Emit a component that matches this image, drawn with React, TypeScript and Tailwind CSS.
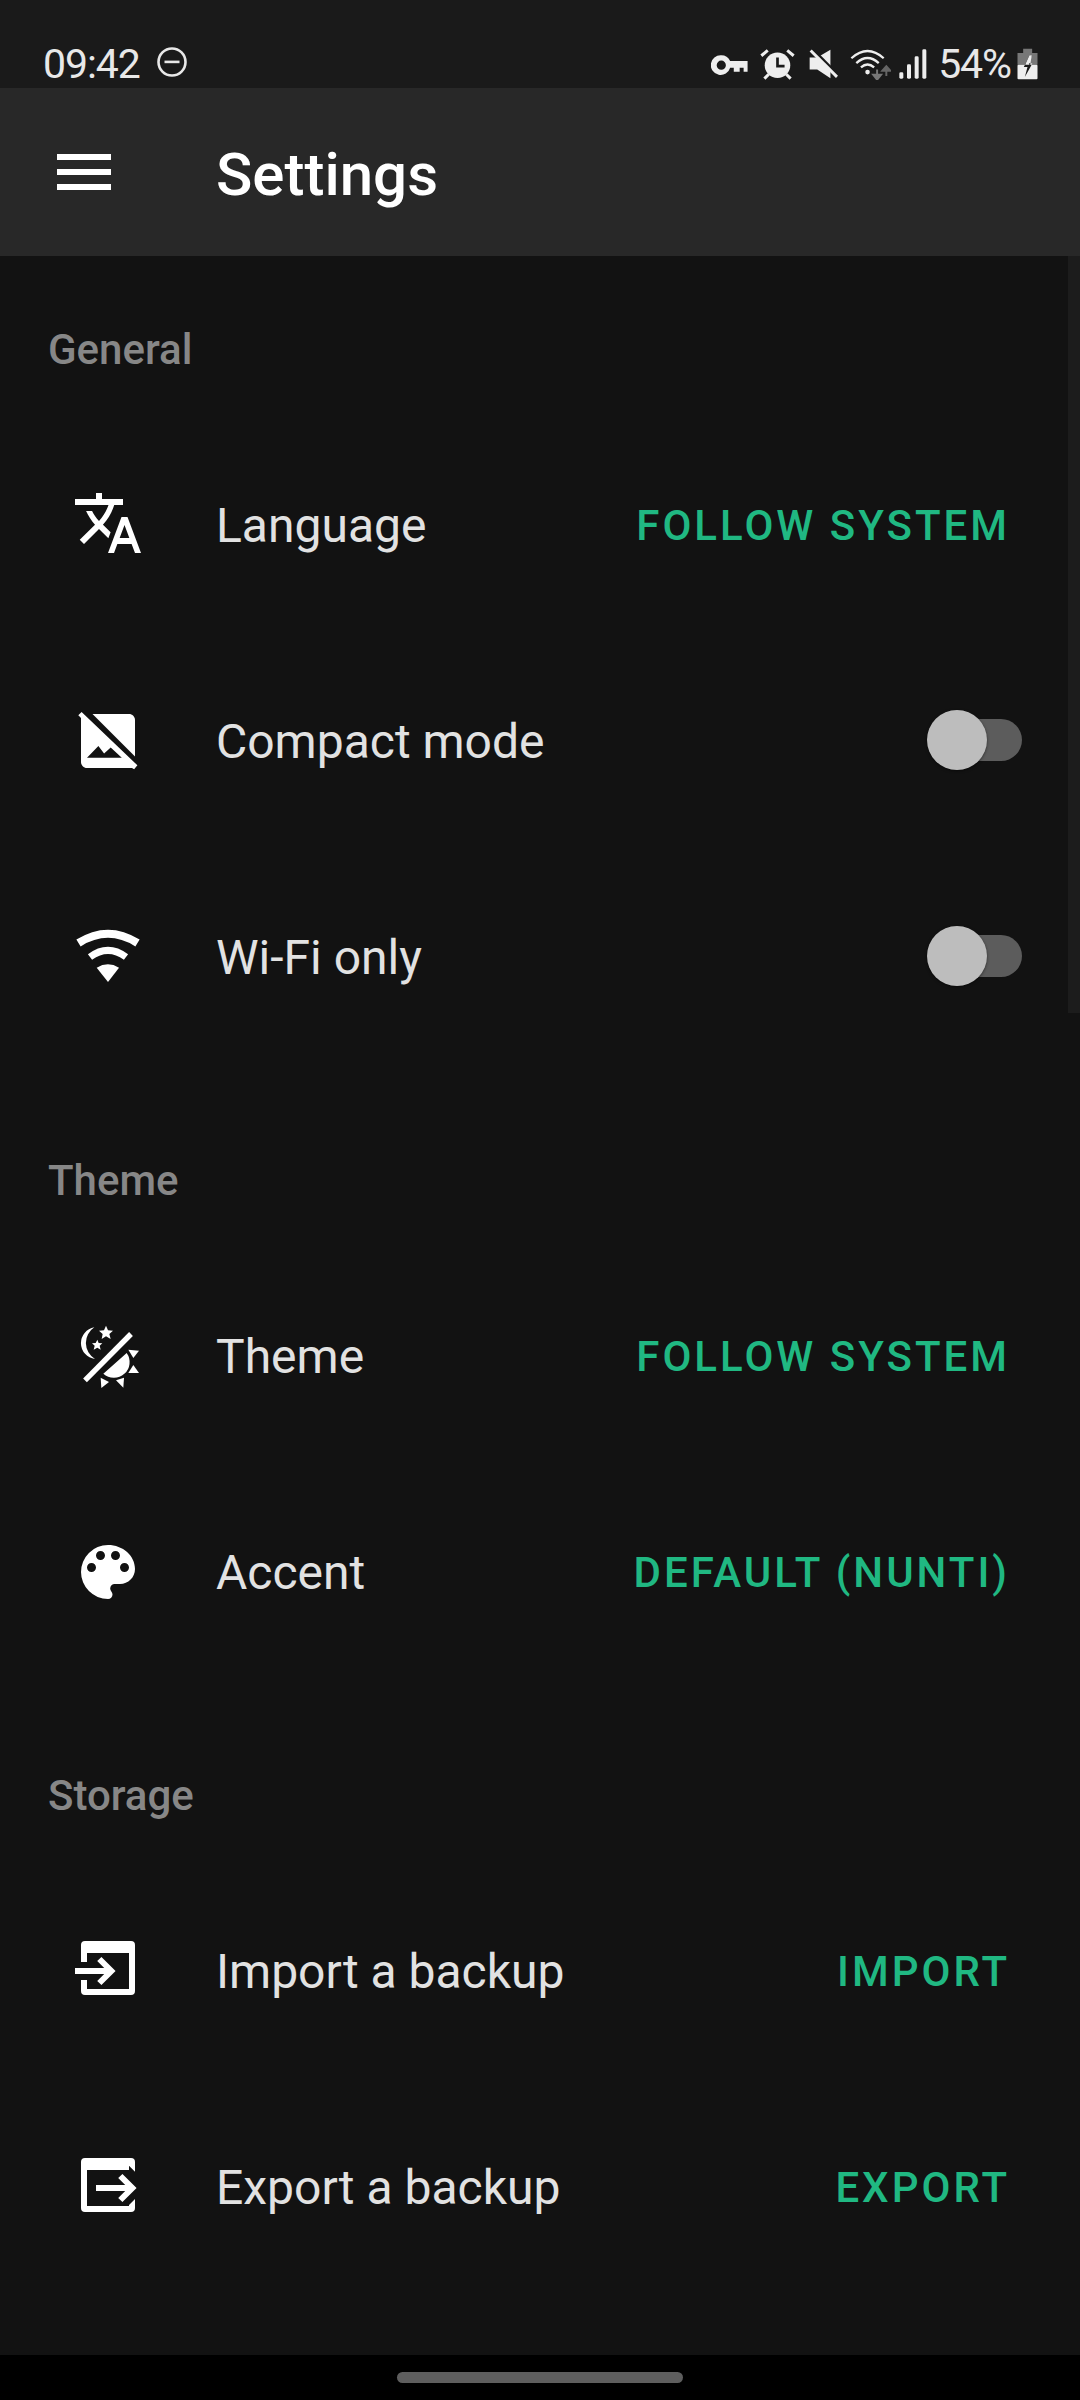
import React from 'react';

const ROBOTO = "font-['Roboto',sans-serif]";

function KeyIcon() {
  return (
    <svg viewBox="92 90 110 70" className="w-[37px] h-[23px]">
      <path
        fillRule="evenodd"
        fill="#eeeeee"
        d="M122 97a30 30 0 0 1 27 17H202V147H190V135H178V147H160V135H149A30 30 0 1 1 122 97zM122 113a14 14 0 1 0 0 28 14 14 0 0 0 0-28z"
      />
    </svg>
  );
}

function AlarmIcon() {
  return (
    <svg viewBox="240 80 104 92" className="w-[35px] h-[31px]">
      <circle cx="292" cy="128" r="38" fill="#eeeeee" />
      <path d="M292 105V131H313" fill="none" stroke="#1a1a1a" strokeWidth="8" />
      <path
        d="M244 100 263 84M340 100 321 84M253 168 266 155M331 168 318 155"
        fill="none"
        stroke="#eeeeee"
        strokeWidth="9"
      />
    </svg>
  );
}

function MuteIcon() {
  return (
    <svg viewBox="385 80 88 90" className="w-[29px] h-[30px]">
      <path d="M387 105H410L450 82V168L410 142H387Z" fill="#eeeeee" />
      <path d="M398 82 480 164" stroke="#1a1a1a" strokeWidth="8" fill="none" />
      <path d="M390 84 470 164" stroke="#eeeeee" strokeWidth="9" fill="none" />
    </svg>
  );
}

function WifiStatusIcon() {
  return (
    <svg viewBox="508 78 124 94" className="w-[41px] h-[31px]">
      <g fill="none" stroke="#eeeeee" strokeWidth="7">
        <path d="M512 106Q561 62 610 106" />
        <path d="M527 121Q561 90 595 121" />
        <path d="M541 134Q561 116 581 134" />
      </g>
      <circle cx="561" cy="148" r="7" fill="#eeeeee" />
      <path d="M590 140V160M578 156 590 171 602 156Z" stroke="#777777" strokeWidth="6" fill="#777777" />
      <path d="M618 160V140M606 144 618 130 630 144Z" stroke="#666666" strokeWidth="6" fill="#666666" />
    </svg>
  );
}

function SignalIcon() {
  return (
    <svg viewBox="654 84 84 90" className="w-[28px] h-[30px]" fill="#eeeeee">
      <rect x="655" y="154" width="12" height="19" rx="4" />
      <rect x="678" y="130" width="12" height="43" rx="4" />
      <rect x="701" y="106" width="12" height="67" rx="4" />
      <rect x="724" y="85" width="12" height="88" rx="4" />
    </svg>
  );
}

function BatteryIcon() {
  return (
    <svg viewBox="1010 78 62 96" className="w-[21px] h-[32px]">
      <path d="M1028 80H1055V93H1071V128H1011V93H1028Z" fill="#777777" />
      <rect x="1011" y="128" width="60" height="44" rx="3" fill="#eeeeee" />
      <path d="M1047 100 1030 135H1041L1033 165 1056 124H1045L1054 100Z" fill="#1a1a1a" />
      <path d="M1047 100 1034 128H1049L1054 100ZM1047 128 1045 124H1056L1054 128Z" fill="#eeeeee" />
    </svg>
  );
}

function StatusBar() {
  return (
    <div className="h-[88px] bg-[#1a1a1a] flex items-center pt-[40px] pl-[43px] pr-[42px] text-[41px] tracking-[-1.1px] text-[#e8e8e8]">
      <span className="leading-none">09:42</span>
      <svg viewBox="0 0 32 32" className="w-[32px] h-[32px] ml-[16px] -mt-[4px]">
        <circle cx="16" cy="16" r="13.5" fill="none" stroke="#e8e8e8" strokeWidth="2.6" />
        <rect x="8.5" y="14.6" width="15" height="2.6" fill="#e8e8e8" />
      </svg>
      <div className="ml-auto flex items-center">
        <KeyIcon />
        <div className="ml-[12px]"><AlarmIcon /></div>
        <div className="ml-[14px]"><MuteIcon /></div>
        <div className="ml-[12px]"><WifiStatusIcon /></div>
        <div className="ml-[8px]"><SignalIcon /></div>
        <span className="ml-[11px] leading-none">54%</span>
        <div className="ml-[6px]"><BatteryIcon /></div>
      </div>
    </div>
  );
}

function Toolbar() {
  return (
    <div className="h-[168px] bg-[#282828] flex items-center">
      <div className="w-[216px] pl-[57px] flex flex-col gap-[9px]">
        <div className="w-[54px] h-[6px] bg-white" />
        <div className="w-[54px] h-[6px] bg-white" />
        <div className="w-[54px] h-[6px] bg-white" />
      </div>
      <h1 className="text-[60px] pt-[6px] font-medium text-white leading-none">Settings</h1>
    </div>
  );
}

function TranslateIcon() {
  return (
    <svg viewBox="0 0 24 24" className="w-[72px] h-[72px] -translate-y-[3px]" fill="#ffffff">
      <path d="M12.87 15.07l-2.54-2.51.03-.03c1.74-1.94 2.98-4.17 3.71-6.53H17V4h-7V2H8v2H1v1.99h11.17C11.5 7.92 10.44 9.75 9 11.35 8.07 10.32 7.3 9.19 6.69 8h-2c.73 1.63 1.73 3.17 2.98 4.56l-5.09 5.02L4 19l5-5 3.11 3.11.76-2.04zM18.5 10h-2L12 22h2l1.12-3h4.75L21 22h2l-4.5-12zm-2.62 7l1.62-4.33L19.12 17h-3.24z" />
    </svg>
  );
}

function NoImageIcon() {
  return (
    <svg viewBox="0 0 24 24" className="w-[72px] h-[72px] -translate-y-px" fill="#ffffff">
      <path d="M21 17.17 6.83 3H19c1.1 0 2 .9 2 2z" />
      <path
        fillRule="evenodd"
        d="M2.1 3.4 3.2 2.3 21.8 20.1 20.7 21.4 20 21H5c-1.1 0-2-.9-2-2V4.3zM5 17.6H16.6L12.9 14.2 10.7 16.2 8.8 13.7z"
      />
    </svg>
  );
}

function WifiIcon() {
  return (
    <svg viewBox="0 0 72 72" className="w-[72px] h-[72px] -translate-y-[2px]">
      <path d="M6.5 23Q36 4.5 65.5 23" fill="none" stroke="#ffffff" strokeWidth="8" />
      <path d="M18 37Q36 23.6 54 37" fill="none" stroke="#ffffff" strokeWidth="7" />
      <path d="M24.7 47.7Q36 41 47 47.7L36 62Z" fill="#ffffff" />
    </svg>
  );
}

function ThemeIcon() {
  return (
    <svg viewBox="96 54 216 216" className="w-[72px] h-[72px]" fill="#ffffff">
      <path d="M163 73A48 48 0 0 0 165 168A56 56 0 0 1 163 73Z" />
      <path d="M198 68 204 82 219 83 208 93 212 108 198 100 185 108 188 93 177 83 192 82Z" />
      <path d="M172 110 176 120 187 121 179 128 182 140 172 134 161 140 164 128 156 121 167 120Z" />
      <path d="M273 93 135 232" stroke="#ffffff" strokeWidth="16" fill="none" />
      <path d="M260 150A47 47 0 0 1 190 212Z" />
      <path d="M265 140 297 143 280 165Z" />
      <path d="M265 210 280 186 297 210Z" />
      <path d="M228 232 252 224 250 254Z" />
      <path d="M182 224 207 237 184 255Z" />
    </svg>
  );
}

function PaletteIcon() {
  return (
    <svg viewBox="0 0 24 24" className="w-[72px] h-[72px] -translate-y-[1px]" fill="#ffffff">
      <path d="M12 3a9 9 0 0 0 0 18c.83 0 1.5-.67 1.5-1.5 0-.39-.15-.74-.39-1.01-.23-.26-.38-.61-.38-.99 0-.83.67-1.5 1.5-1.5H16c2.76 0 5-2.24 5-5 0-4.42-4.03-8-9-8zm-5.5 9c-.83 0-1.5-.67-1.5-1.5S5.67 9 6.5 9 8 9.67 8 10.5 7.33 12 6.5 12zm3-4C8.67 8 8 7.33 8 6.5S8.67 5 9.5 5s1.5.67 1.5 1.5S10.33 8 9.5 8zm5 0c-.83 0-1.5-.67-1.5-1.5S13.67 5 14.5 5s1.5.67 1.5 1.5S15.33 8 14.5 8zm3 4c-.83 0-1.5-.67-1.5-1.5S16.67 9 17.5 9s1.5.67 1.5 1.5-.67 1.5-1.5 1.5z" />
    </svg>
  );
}

function ImportIcon() {
  return (
    <svg viewBox="96 99 216 216" className="w-[72px] h-[72px] -translate-y-[4px]">
      <path
        fill="#ffffff"
        d="M123 189V138a12 12 0 0 1 12-12H273a12 12 0 0 1 12 12V276a12 12 0 0 1-12 12H135a12 12 0 0 1-12-12V243H141V270H267V162H141V189Z"
      />
      <path d="M105 216H214M178 180 214 216 178 252" fill="none" stroke="#ffffff" strokeWidth="18" />
    </svg>
  );
}

function ExportIcon() {
  return (
    <svg viewBox="96 747 216 216" className="w-[72px] h-[72px] -translate-y-[3px]">
      <path
        fill="#ffffff"
        d="M285 815V786a12 12 0 0 0-12-12H135a12 12 0 0 0-12 12V924a12 12 0 0 0 12 12H273a12 12 0 0 0 12-12V897L267 915V918H141V810H267V797Z"
      />
      <path d="M168 864H277M241 828 277 864 241 900" fill="none" stroke="#ffffff" strokeWidth="18" />
    </svg>
  );
}

function Toggle() {
  return (
    <div className="relative w-[95px] h-[60px] mr-[58px] flex items-center justify-end -translate-y-[2px]">
      <div className="w-[85px] h-[42px] rounded-full bg-[#5c5c5c]" />
      <div className="absolute left-0 top-0 w-[60px] h-[60px] rounded-full bg-[#bdbdbd] shadow-[0_1px_3px_rgba(0,0,0,0.5)]" />
    </div>
  );
}

function SettingRow(props: { icon: React.ReactNode; title: string; value?: string; toggle?: boolean }) {
  return (
    <div className="h-[216px] flex items-center">
      <div className="w-[216px] pl-[72px] shrink-0">{props.icon}</div>
      <span className="text-[48px] text-[#e2e2e2] leading-none">{props.title}</span>
      {props.value && (
        <span className="ml-auto mr-[70px] text-[42px] font-medium tracking-[3px] text-[#20b882] leading-none">
          {props.value}
        </span>
      )}
      {props.toggle && <div className="ml-auto"><Toggle /></div>}
    </div>
  );
}

function SectionTitle(props: { title: string; first?: boolean }) {
  return (
    <div className={props.first ? 'pt-[71px] pb-[45px]' : 'pt-[92px] pb-[45px]'}>
      <p className="pl-[48px] text-[42px] leading-[46px] font-medium text-[#878787]">{props.title}</p>
    </div>
  );
}

export default function App() {
  return (
    <div className={`w-[1080px] h-[2400px] overflow-hidden flex flex-col bg-[#121212] ${ROBOTO}`}>
      <StatusBar />
      <Toolbar />
      <main className="relative flex-1 overflow-hidden">
        <div className="absolute right-0 top-0 w-[12px] h-[757px] bg-[#1c1c1c]" />
        <SectionTitle title="General" first />
        <SettingRow icon={<TranslateIcon />} title="Language" value="FOLLOW SYSTEM" />
        <SettingRow icon={<NoImageIcon />} title="Compact mode" toggle />
        <SettingRow icon={<WifiIcon />} title="Wi-Fi only" toggle />
        <SectionTitle title="Theme" />
        <SettingRow icon={<ThemeIcon />} title="Theme" value="FOLLOW SYSTEM" />
        <SettingRow icon={<PaletteIcon />} title="Accent" value="DEFAULT (NUNTI)" />
        <SectionTitle title="Storage" />
        <SettingRow icon={<ImportIcon />} title="Import a backup" value="IMPORT" />
        <SettingRow icon={<ExportIcon />} title="Export a backup" value="EXPORT" />
      </main>
      <div className="h-[45px] bg-black flex items-start justify-center pt-[17px]">
        <div className="w-[286px] h-[11px] rounded-full bg-[#5e5e5e]" />
      </div>
    </div>
  );
}
